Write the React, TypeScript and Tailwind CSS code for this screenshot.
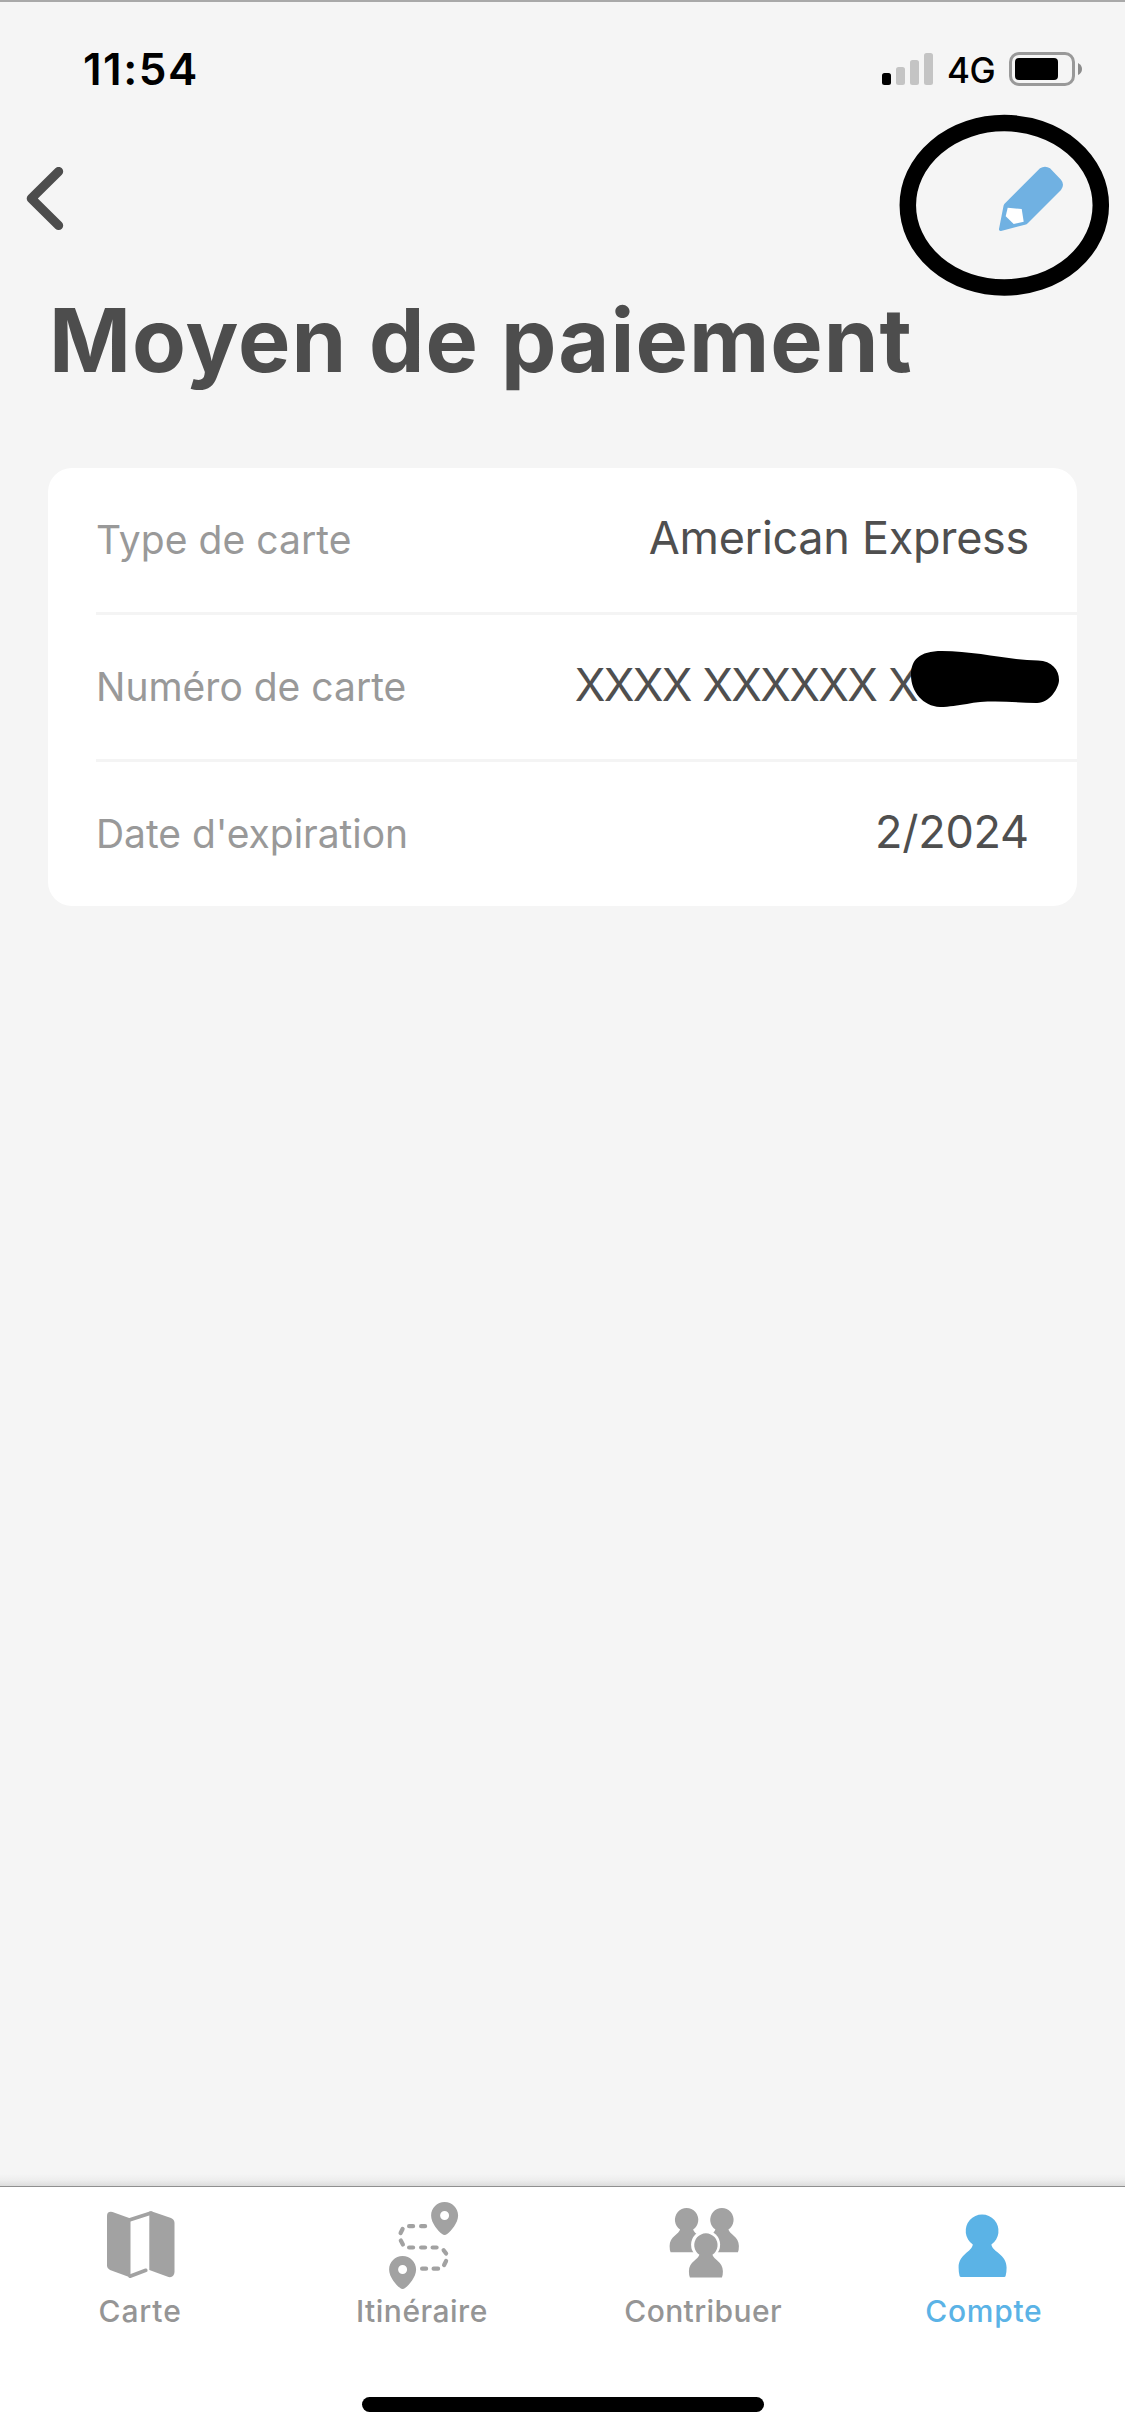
import React from 'react';

const rows = [
  { label: 'Type de carte', value: 'American Express', labelClass: 'tracking-[0.05px]', valueClass: 'tracking-[-0.3px]' },
  { label: 'Numéro de carte', value: 'XXXX XXXXXX X', labelClass: 'tracking-[0px]', valueClass: 'tracking-[-1.7px] [word-spacing:0.7px]', masked: true },
  { label: "Date d'expiration", value: '2/2024', labelClass: 'tracking-[-0.05px]', valueClass: 'tracking-[-0.2px]' },
];

function StatusBar() {
  return (
    <div className="flex h-[100px] items-start justify-between border-t-2 border-[#a9a9a9] pl-[83px] pr-[43px] pt-[45px]">
      <span className="text-[44px] font-semibold leading-[44px] tracking-[1.5px] text-black">11:54</span>
      <div className="flex h-[44px] items-center">
        <svg className="h-[32px] w-[51px]" viewBox="0 0 51 32">
          <rect x="0" y="20" width="9" height="12" rx="2.5" fill="#000" />
          <rect x="14" y="14" width="9" height="18" rx="2.5" fill="#c4c4c4" />
          <rect x="28" y="7" width="9" height="25" rx="2.5" fill="#c4c4c4" />
          <rect x="42" y="0" width="9" height="32" rx="2.5" fill="#c4c4c4" />
        </svg>
        <span className="ml-[14px] mt-[2px] w-[62px] text-[35px] font-medium leading-[44px] tracking-[-0.5px] text-black">4G</span>
        <svg className="h-[34px] w-[73px]" viewBox="0 0 73 34">
          <rect x="1.5" y="1.5" width="63" height="31" rx="8.5" fill="none" stroke="#999" strokeWidth="3" />
          <rect x="6" y="6" width="43" height="22" rx="4" fill="#000" />
          <path d="M69 11Q73 13 73 17T69 23Z" fill="#8c8c8c" />
        </svg>
      </div>
    </div>
  );
}

function Header() {
  return (
    <div className="flex h-[180px] items-start justify-between pl-[26px] pr-[61px] pt-[66px]">
      <svg className="mt-px h-[64px] w-[38px]" viewBox="26 167 38 64">
        <path d="M58.6 171.5L31.3 198.5L58.6 225.5" fill="none" stroke="#4d4d4d" strokeWidth="9.2" strokeLinecap="round" strokeLinejoin="round" />
      </svg>
      <div className="relative">
        <svg className="h-[66px] w-[66px]" viewBox="998 166 66 66">
          <path
            d="M1004.3 204L1040 168.3Q1045 165 1050 168.3L1061 179.7Q1065 184.5 1061 190L1028 223Q1026.7 224.5 1025 224.8L1001 230.9Q998.7 231.2 999 229L1003.6 205.5Z"
            fill="#70b1e2"
          />
          <path d="M1007.7 207.7L1021.7 209L1023.7 221.7L1013.7 224L1005.7 216.3Z" fill="#fff" />
        </svg>
        {/* Hand-drawn ring around the edit icon */}
        <svg className="absolute left-[-100px] top-[-54px] h-[188px] w-[216px]" viewBox="898 112 216 188">
          <ellipse cx="1004.3" cy="205.3" rx="96.5" ry="82.2" fill="none" stroke="#000" strokeWidth="16.5" />
        </svg>
      </div>
    </div>
  );
}

function Redaction() {
  return (
    <svg className="absolute left-[813px] top-[33px] h-[62px] w-[152px]" viewBox="909 648 152 62">
      <path
        d="M911 675C911 660 919 651 942 651C976 651 1008 660 1038 660.5C1052 661 1059 670 1059 680C1059 688 1049 704 1036 703C1010 702 985 700 967 704C957 705 950 707 940 707C923 706 911 692 911 675Z"
        fill="#000"
      />
    </svg>
  );
}

function CardDetails() {
  return (
    <div className="mx-[48px] rounded-[24px] bg-white pl-[48px]">
      {rows.map((row, i) => (
        <div
          key={row.label}
          className={`relative flex items-baseline justify-between pr-[48px] pt-[42px] ${i > 0 ? 'h-[147px] border-t-3 border-[#f4f4f4]' : 'h-[144px]'}`}
        >
          <span className={`text-[39px] leading-[55px] text-[#999] ${row.labelClass}`}>{row.label}</span>
          {row.masked ? (
            <>
              <span className={`mr-[112px] text-[45px] leading-[55px] text-[#4f4f4f] ${row.valueClass}`}>{row.value}</span>
              <Redaction />
            </>
          ) : (
            <span className={`text-[45px] leading-[55px] text-[#4f4f4f] ${row.valueClass}`}>{row.value}</span>
          )}
        </div>
      ))}
    </div>
  );
}

function MapIcon() {
  return (
    <svg className="h-[90px] w-[80px]" viewBox="101 2200 80 90">
      <path d="M107 2216Q107 2211 112.5 2212L130.5 2218.5V2277.5L110 2270Q107 2268.5 107 2266Z" fill="#a2a2a2" />
      <path d="M149.3 2211.5H152L171 2218Q174.5 2219.5 174.5 2223V2272Q174 2278 168.5 2277L149.3 2270Z" fill="#a2a2a2" />
      <path d="M130 2219.8L151 2213M130 2276.2L145.8 2270.3" fill="none" stroke="#a2a2a2" strokeWidth="3.6" strokeLinecap="round" />
    </svg>
  );
}

function RouteIcon() {
  const pin = 'M0 13.5C0 6 6 0 13.5 0S27 6 27 13.5C27 21 20 29 16 32Q13.5 34 11 32C7 29 0 21 0 13.5ZM13.5 9A4.5 4.5 0 1 0 13.5 18A4.5 4.5 0 1 0 13.5 9Z';
  return (
    <svg className="h-[90px] w-[80px]" viewBox="381.9 2200 80 90" fill="#a2a2a2">
      <path d={pin} transform="translate(431 2202)" />
      <path d={pin} transform="translate(389 2256)" />
      <path
        d="M425 2226.2H421M413 2226.2H409M402.5 2229L400.5 2233M400.7 2240.5L402.8 2244.5M409 2247.5H413M421 2247.5H425M432.5 2247.5H436.5M443.5 2250.2L446 2253.5M446 2261L444 2265M438 2268.7H433.5M426 2268.7H422"
        fill="none"
        stroke="#a2a2a2"
        strokeWidth="4.2"
        strokeLinecap="round"
      />
    </svg>
  );
}

const smallPerson = 'M10.5 21.5A11.7 11.7 0 1 1 23.5 21.5C24.5 26 34 28.5 34 38Q34 42 33 44.3H1Q0 42 0 38C0 28.5 9.5 26 10.5 21.5Z';

function PeopleIcon() {
  return (
    <svg className="h-[90px] w-[80px]" viewBox="663.1 2200 80 90" fill="#a2a2a2">
      <path d={smallPerson} transform="translate(669.7 2208)" />
      <path d={smallPerson} transform="translate(705 2208)" />
      <circle cx="705.7" cy="2244.7" r="14.5" fill="#fff" />
      <path d={smallPerson} transform="translate(689 2233.3)" />
    </svg>
  );
}

function PersonIcon() {
  return (
    <svg className="h-[90px] w-[80px]" viewBox="944.4 2200 80 90">
      <path
        d="M973.2 2244.5A16.4 16.4 0 1 1 991.8 2244.5C992.5 2252 1007 2254 1007 2267.5Q1007 2273 1006 2276Q1005.7 2277 1004.5 2277H961.5Q960.3 2277 960 2276Q959 2273 959 2267.5C959 2254 972.5 2252 973.2 2244.5Z"
        fill="#5bb3e6"
      />
    </svg>
  );
}

const tabs = [
  { label: 'Carte', icon: <MapIcon />, labelClass: 'tracking-[0.9px] pr-px text-[#959595]' },
  { label: 'Itinéraire', icon: <RouteIcon />, labelClass: 'tracking-[0.5px] text-[#959595]' },
  { label: 'Contribuer', icon: <PeopleIcon />, labelClass: 'tracking-[0.4px] text-[#959595]' },
  { label: 'Compte', icon: <PersonIcon />, labelClass: 'tracking-[0.7px] pr-px text-[#5bb3e6]' },
];

function TabBar() {
  return (
    <div className="mt-auto">
      <div className="h-[12px] bg-linear-to-b from-[#f5f5f5] via-[#eeeeee] to-[#dcdcdc]" />
      <div className="flex h-[250px] flex-col items-center justify-between border-t border-[#8f8f8f] bg-white pb-[24px] pt-[13px]">
        <div className="grid w-full grid-cols-4">
          {tabs.map((tab) => (
            <div key={tab.label} className="flex flex-col items-center">
              {tab.icon}
              <span className={`mt-[2px] text-[30px] font-medium leading-[38px] ${tab.labelClass}`}>{tab.label}</span>
            </div>
          ))}
        </div>
        <div className="h-[15px] w-[402px] rounded-full bg-black" />
      </div>
    </div>
  );
}

export default function App() {
  return (
    <div className="flex h-[2436px] w-[1125px] flex-col overflow-hidden bg-[#f5f5f5] font-['Inter',sans-serif]">
      <StatusBar />
      <Header />
      <h1 className="h-[188px] whitespace-nowrap pl-[49px] pt-[10px] text-[88px] font-bold leading-[100px] tracking-[1.05px] text-[#4d4d4d]">
        Moyen de paiement
      </h1>
      <CardDetails />
      <TabBar />
    </div>
  );
}
